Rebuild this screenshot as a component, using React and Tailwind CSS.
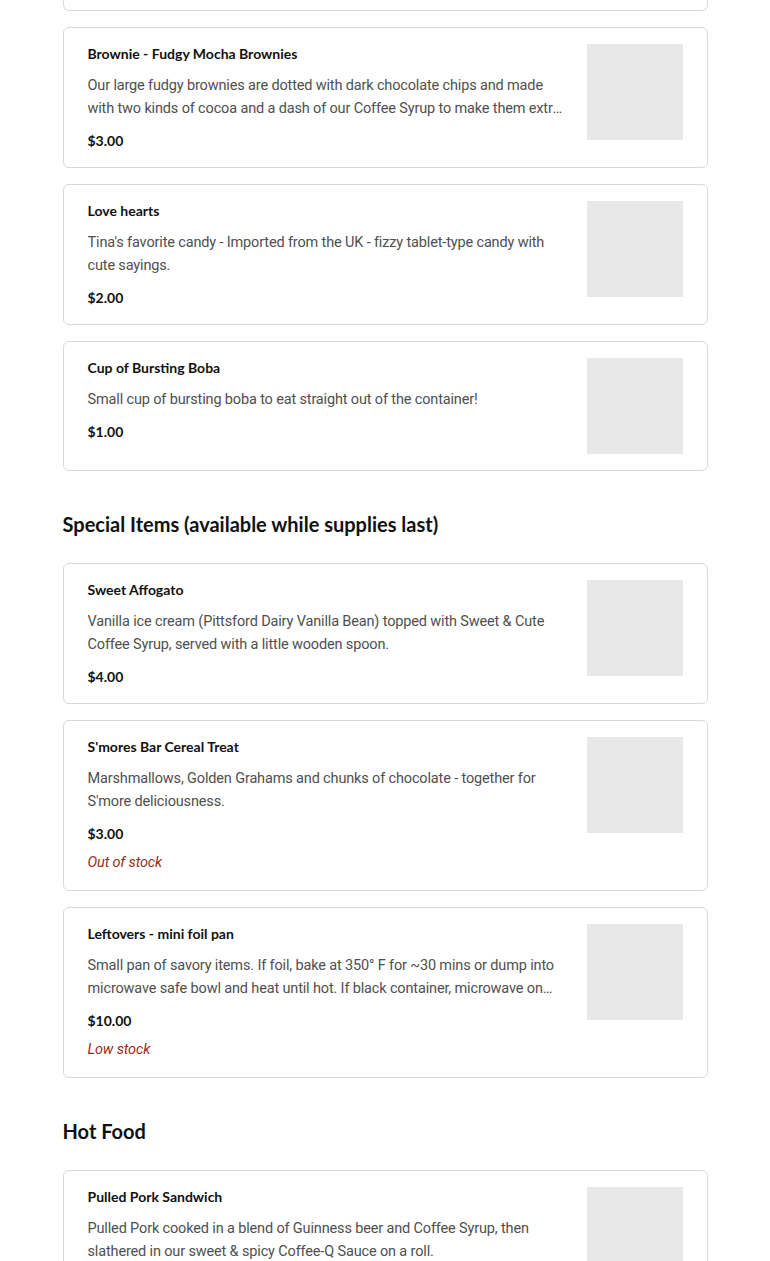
import React from 'react';

const sections = [
  {
    title: null,
    items: [
      {
        name: 'Brownie - Fudgy Mocha Brownies',
        desc: 'Our large fudgy brownies are dotted with dark chocolate chips and made with two kinds of cocoa and a dash of our Coffee Syrup to make them extra mocha-licious and rich.',
        price: '$3.00',
      },
      {
        name: 'Love hearts',
        desc: "Tina's favorite candy - Imported from the UK - fizzy tablet-type candy with cute sayings.",
        price: '$2.00',
      },
      {
        name: 'Cup of Bursting Boba',
        desc: 'Small cup of bursting boba to eat straight out of the container!',
        price: '$1.00',
      },
    ],
  },
  {
    title: 'Special Items (available while supplies last)',
    items: [
      {
        name: 'Sweet Affogato',
        desc: 'Vanilla ice cream (Pittsford Dairy Vanilla Bean) topped with Sweet & Cute Coffee Syrup, served with a little wooden spoon.',
        price: '$4.00',
      },
      {
        name: "S'mores Bar Cereal Treat",
        desc: "Marshmallows, Golden Grahams and chunks of chocolate - together for S'more deliciousness.",
        price: '$3.00',
        stock: 'Out of stock',
      },
      {
        name: 'Leftovers - mini foil pan',
        desc: 'Small pan of savory items. If foil, bake at 350° F for ~30 mins or dump into microwave safe bowl and heat until hot. If black container, microwave on high for a few minutes.',
        price: '$10.00',
        stock: 'Low stock',
      },
    ],
  },
  {
    title: 'Hot Food',
    items: [
      {
        name: 'Pulled Pork Sandwich',
        desc: 'Pulled Pork cooked in a blend of Guinness beer and Coffee Syrup, then slathered in our sweet & spicy Coffee-Q Sauce on a roll.',
        price: '$8.00',
      },
    ],
  },
];

const headFont = { fontFamily: 'Lato, Inter, sans-serif' };

function ItemCard({ item }) {
  return (
    <div className="flex gap-6 rounded-md border border-[#d9d9d9] bg-white px-6 py-4">
      <div className="min-w-0 flex-1">
        <h3 className="text-[14px] leading-5 font-bold text-[#111]" style={headFont}>{item.name}</h3>
        <p className="mt-[10px] line-clamp-2 font-['Roboto',sans-serif] text-[14.5px] leading-[23px] tracking-[-0.15px] text-[#4f4f4f]">
          {item.desc}
        </p>
        <div className="mt-[11px] text-[14px] leading-5 font-bold text-[#111]" style={headFont}>{item.price}</div>
        {item.stock && (
          <div className="mt-2 font-['Roboto',sans-serif] text-[14.5px] leading-[22px] tracking-[-0.15px] text-[#9b2a25] italic">
            {item.stock}
          </div>
        )}
      </div>
      <div className="h-24 w-24 shrink-0 bg-[#e8e8e8]" />
    </div>
  );
}

export default function App() {
  return (
    <div className="min-h-screen bg-white">
      <div className="mx-auto w-[645px] pb-10">
        <div className="h-[11px] rounded-b-md border-x border-b border-[#d9d9d9]" />
        {sections.map((s, i) => (
          <section key={i} className={s.title ? 'mt-[39px]' : 'mt-4'}>
            {s.title && (
              <h2 className="mb-[25px] text-[20px] leading-7 font-bold text-[#111]" style={headFont}>
                {s.title}
              </h2>
            )}
            <div className="flex flex-col gap-4">
              {s.items.map((item) => (
                <ItemCard key={item.name} item={item} />
              ))}
            </div>
          </section>
        ))}
      </div>
    </div>
  );
}
